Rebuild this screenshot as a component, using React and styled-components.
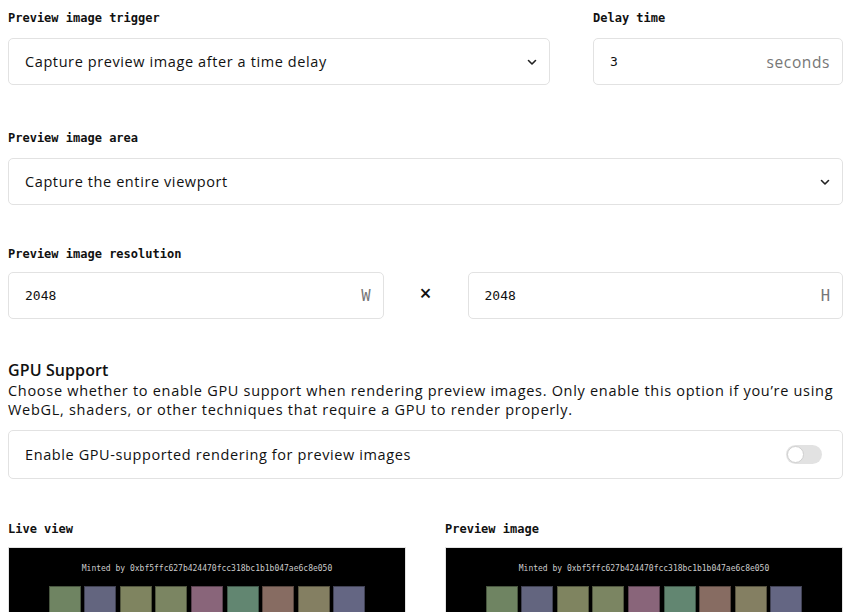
import React, { useState } from "react";
import styled, { createGlobalStyle } from "styled-components";

const GlobalStyle = createGlobalStyle`
  body {
    margin: 0;
    background: #fff;
    color: #111;
    font-family: "Open Sans", "Liberation Sans", sans-serif;
  }
`;

const squares = [
  "#6f8462",
  "#63657f",
  "#7f8460",
  "#7b8562",
  "#89657a",
  "#628671",
  "#876c62",
  "#847f62",
  "#646683",
];

const Page = () => {
  const [gpu, setGpu] = useState(false);

  return (
    <>
      <GlobalStyle />
      <Wrapper>
        <Row>
          <Field $grow>
            <Label>Preview image trigger</Label>
            <Select>
              <span>Capture preview image after a time delay</span>
              <Chevron />
            </Select>
          </Field>
          <Field $width="250px">
            <Label>Delay time</Label>
            <InputBox>
              <Value>3</Value>
              <Unit $sans>seconds</Unit>
            </InputBox>
          </Field>
        </Row>

        <Field $top="43px">
          <Label>Preview image area</Label>
          <Select>
            <span>Capture the entire viewport</span>
            <Chevron />
          </Select>
        </Field>

        <Field $top="39px" $gap="8px">
          <Label>Preview image resolution</Label>
          <ResolutionRow>
            <InputBox>
              <Value>2048</Value>
              <Unit>W</Unit>
            </InputBox>
            <Times>×</Times>
            <InputBox>
              <Value>2048</Value>
              <Unit>H</Unit>
            </InputBox>
          </ResolutionRow>
        </Field>

        <GpuSection>
          <Heading>GPU Support</Heading>
          <Description>
            Choose whether to enable GPU support when rendering preview images. Only enable this
            option if you’re using WebGL, shaders, or other techniques that require a GPU to render
            properly.
          </Description>
          <ToggleBox onClick={() => setGpu(!gpu)}>
            <span>Enable GPU-supported rendering for preview images</span>
            <Switch $on={gpu}>
              <Knob />
            </Switch>
          </ToggleBox>
        </GpuSection>

        <Previews>
          {["Live view", "Preview image"].map((title) => (
            <Field key={title} $gap="8px">
              <Label>{title}</Label>
              <Frame>
                <Minted>Minted by 0xbf5ffc627b424470fcc318bc1b1b047ae6c8e050</Minted>
                <Swatches>
                  {squares.map((c, i) => (
                    <Swatch key={i} style={{ background: c }} />
                  ))}
                </Swatches>
              </Frame>
            </Field>
          ))}
        </Previews>
      </Wrapper>
    </>
  );
};

const Chevron = () => (
  <svg width="12" height="12" viewBox="0 0 12 12" fill="none">
    <path d="M2.5 4.5L6 8l3.5-3.5" stroke="#222" strokeWidth="1.6" strokeLinecap="round" strokeLinejoin="round" />
  </svg>
);

export default Page;

const Wrapper = styled.div`
  width: 835px;
  padding: 8px 0 0 8px;
  display: flex;
  flex-direction: column;
`;

const Row = styled.div`
  display: flex;
  gap: 43px;
`;

const Field = styled.div`
  display: flex;
  flex-direction: column;
  gap: ${(p) => p.$gap || "10px"};
  margin-top: ${(p) => p.$top || "0"};
  flex: ${(p) => (p.$grow ? "1" : "none")};
  width: ${(p) => p.$width || "auto"};
`;

const Label = styled.div`
  font-family: "DejaVu Sans Mono", "Liberation Mono", monospace;
  font-weight: bold;
  font-size: 12px;
  line-height: 20px;
  color: #111;
`;

const boxBase = `
  box-sizing: border-box;
  height: 47px;
  border: 1px solid #e2e2e2;
  border-radius: 5px;
  display: flex;
  align-items: center;
  justify-content: space-between;
  background: #fff;
`;

const Select = styled.div`
  ${boxBase}
  padding: 0 11px 0 16px;
  font-size: 14.5px;
  letter-spacing: 0.6px;
  color: #111;
`;

const InputBox = styled.div`
  ${boxBase}
  flex: 1;
  padding: 0 12px 0 16px;
`;

const Value = styled.span`
  font-family: "DejaVu Sans Mono", "Liberation Mono", monospace;
  font-size: 13px;
  color: #111;
`;

const Unit = styled.span`
  font-family: ${(p) =>
    p.$sans ? '"Open Sans", "Liberation Sans", sans-serif' : '"DejaVu Sans Mono", monospace'};
  font-size: 15.5px;
  letter-spacing: ${(p) => (p.$sans ? "0.6px" : "0")};
  color: #777;
`;

const ResolutionRow = styled.div`
  display: flex;
  align-items: center;
`;

const Times = styled.span`
  width: 84px;
  text-align: center;
  font-size: 21px;
  font-weight: 600;
  margin-top: -6px;
`;

const GpuSection = styled.div`
  display: flex;
  flex-direction: column;
  margin-top: 40px;
`;

const Heading = styled.div`
  font-size: 16px;
  font-weight: 600;
  letter-spacing: 0.1px;
  line-height: 22px;
`;

const Description = styled.p`
  margin: 0 0 11px;
  font-size: 14.5px;
  letter-spacing: 0.7px;
  line-height: 19px;
  color: #111;
`;

const ToggleBox = styled.div`
  ${boxBase}
  height: 49px;
  padding: 0 20px 0 16px;
  font-size: 14.5px;
  letter-spacing: 0.6px;
  cursor: pointer;
`;

const Switch = styled.div`
  width: 36px;
  height: 19px;
  border-radius: 10px;
  background: ${(p) => (p.$on ? "#111" : "#e2e2e2")};
  display: flex;
  align-items: center;
  padding: 0 1px;
  box-sizing: border-box;
  justify-content: ${(p) => (p.$on ? "flex-end" : "flex-start")};
`;

const Knob = styled.div`
  width: 17px;
  height: 17px;
  border-radius: 50%;
  background: #fff;
  box-sizing: border-box;
  border: 1px solid #cfcfcf;
`;

const Previews = styled.div`
  display: grid;
  grid-template-columns: 398px 398px;
  justify-content: space-between;
  margin-top: 40px;
`;

const Frame = styled.div`
  height: 120px;
  background: #000;
  border: 1px solid #e2e2e2;
  display: flex;
  flex-direction: column;
  align-items: center;
  padding-top: 15px;
`;

const Minted = styled.div`
  font-family: "DejaVu Sans Mono", monospace;
  font-size: 8px;
  color: #ccc;
  line-height: 12px;
`;

const Swatches = styled.div`
  display: flex;
  gap: 3.6px;
  margin-top: 11px;
`;

const Swatch = styled.div`
  width: 32px;
  height: 50px;
  box-sizing: border-box;
  border: 1px solid rgba(0, 0, 0, 0.35);
`;
